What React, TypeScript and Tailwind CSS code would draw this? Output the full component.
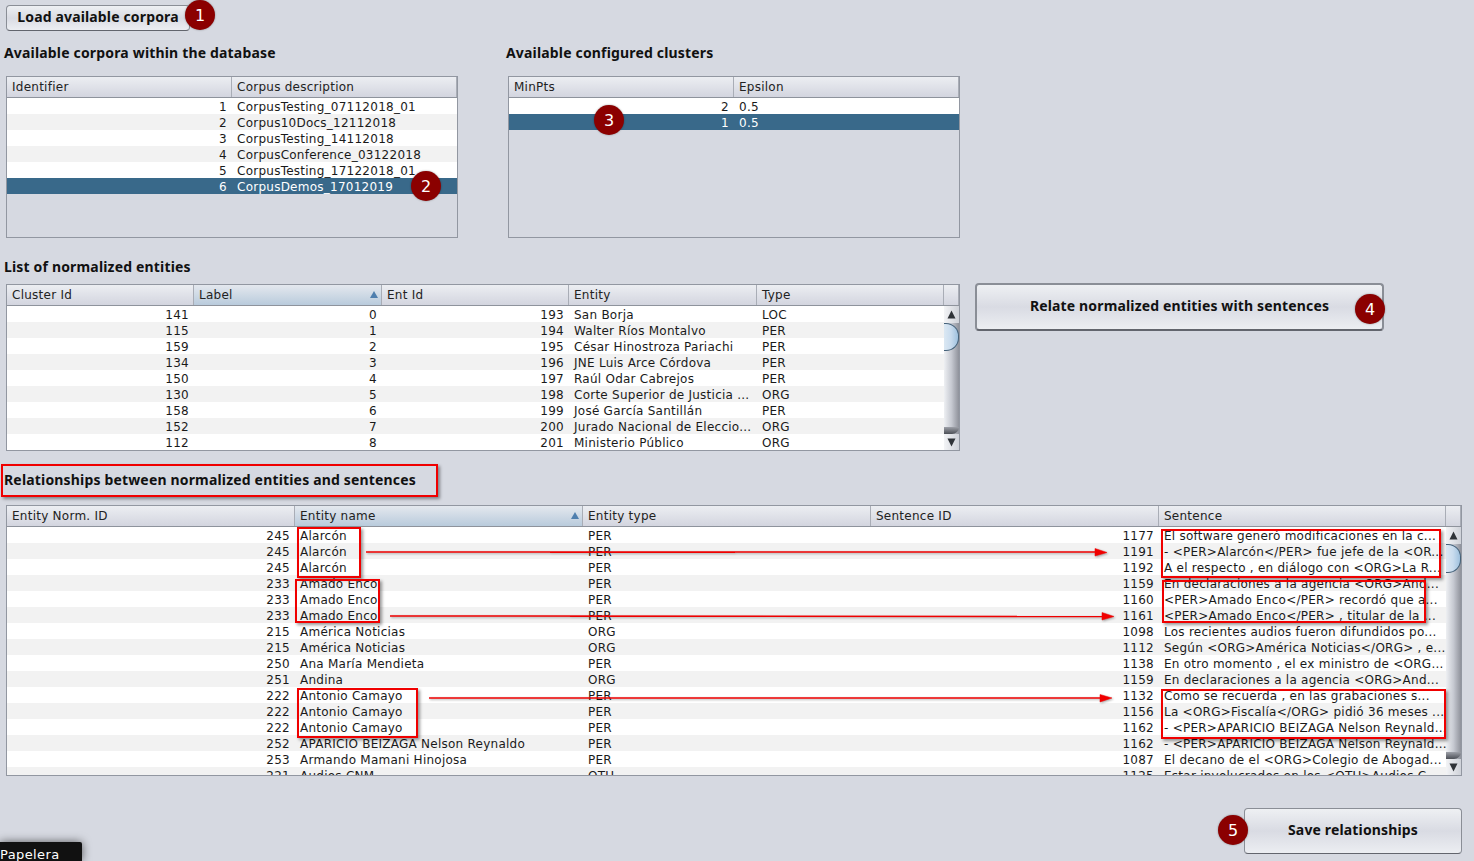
import React from 'react';

type Col = { label: string; width: number; right?: boolean; sorted?: boolean };
type Row = string[];

const corpora: Row[] = [
  ['1', 'CorpusTesting_07112018_01'],
  ['2', 'Corpus10Docs_12112018'],
  ['3', 'CorpusTesting_14112018'],
  ['4', 'CorpusConference_03122018'],
  ['5', 'CorpusTesting_17122018_01'],
  ['6', 'CorpusDemos_17012019'],
];

const clusters: Row[] = [
  ['2', '0.5'],
  ['1', '0.5'],
];

const entities: Row[] = [
  ['141', '0', '193', 'San Borja', 'LOC'],
  ['115', '1', '194', 'Walter Ríos Montalvo', 'PER'],
  ['159', '2', '195', 'César Hinostroza Pariachi', 'PER'],
  ['134', '3', '196', 'JNE Luis Arce Córdova', 'PER'],
  ['150', '4', '197', 'Raúl Odar Cabrejos', 'PER'],
  ['130', '5', '198', 'Corte Superior de Justicia ...', 'ORG'],
  ['158', '6', '199', 'José García Santillán', 'PER'],
  ['152', '7', '200', 'Jurado Nacional de Eleccio...', 'ORG'],
  ['112', '8', '201', 'Ministerio Público', 'ORG'],
];

const relations: Row[] = [
  ['245', 'Alarcón', 'PER', '1177', 'El software generó modificaciones en la c...'],
  ['245', 'Alarcón', 'PER', '1191', '- <PER>Alarcón</PER> fue jefe de la <OR...'],
  ['245', 'Alarcón', 'PER', '1192', 'A el respecto , en diálogo con <ORG>La R...'],
  ['233', 'Amado Enco', 'PER', '1159', 'En declaraciones a la agencia <ORG>And...'],
  ['233', 'Amado Enco', 'PER', '1160', '<PER>Amado Enco</PER> recordó que a...'],
  ['233', 'Amado Enco', 'PER', '1161', '<PER>Amado Enco</PER> , titular de la ...'],
  ['215', 'América Noticias', 'ORG', '1098', 'Los recientes audios fueron difundidos po...'],
  ['215', 'América Noticias', 'ORG', '1112', 'Según <ORG>América Noticias</ORG> , e...'],
  ['250', 'Ana María Mendieta', 'PER', '1138', 'En otro momento , el ex ministro de <ORG...'],
  ['251', 'Andina', 'ORG', '1159', 'En declaraciones a la agencia <ORG>And...'],
  ['222', 'Antonio Camayo', 'PER', '1132', 'Como se recuerda , en las grabaciones s...'],
  ['222', 'Antonio Camayo', 'PER', '1156', 'La <ORG>Fiscalía</ORG> pidió 36 meses ...'],
  ['222', 'Antonio Camayo', 'PER', '1162', '- <PER>APARICIO BEIZAGA Nelson Reynald...'],
  ['252', 'APARICIO BEIZAGA Nelson Reynaldo', 'PER', '1162', '- <PER>APARICIO BEIZAGA Nelson Reynald...'],
  ['253', 'Armando Mamani Hinojosa', 'PER', '1087', 'El decano de el <ORG>Colegio de Abogad...'],
  ['221', 'Audios CNM', 'OTU', '1125', 'Estar involucrados en los <OTU>Audios C...'],
];

function Scrollbar({ thumbTop, thumbHeight, shadeBottom }: { thumbTop: number; thumbHeight: number; shadeBottom: number }) {
  return (
    <div className="absolute top-0 right-0 bottom-0 w-[15px] bg-gradient-to-r from-[#eef0f3] via-[#c6c9d1] to-[#8f929b]">
      <div className="absolute left-0 top-0 w-[15px] h-[17px] bg-gradient-to-r from-[#f3f4f6] to-[#cfd2d9]" />
      <svg className="absolute top-[4px] left-[3px]" width="9" height="9" viewBox="0 0 9 9">
        <path d="M4.5 0.5 L8.5 8.5 L0.5 8.5 Z" fill="#2f3338" />
      </svg>
      <div
        className="absolute left-0 w-[15px] rounded-r-[13px] border border-l-0 border-[#45627a] bg-gradient-to-r from-[#dbe8f3] via-[#c9dcee] to-[#9fc1de]"
        style={{ top: thumbTop, height: thumbHeight }}
      />
      <div
        className="absolute left-0 w-[15px] h-[7px] rounded-br-[12px] bg-gradient-to-b from-[#9ea1a9] to-[#4d5057]"
        style={{ bottom: shadeBottom }}
      />
      <div className="absolute left-0 bottom-0 w-[15px] h-[16px] bg-gradient-to-r from-[#f3f4f6] to-[#cfd2d9]" />
      <svg className="absolute bottom-[3px] left-[3px]" width="9" height="9" viewBox="0 0 9 9">
        <path d="M0.5 0.5 L8.5 0.5 L4.5 8.5 Z" fill="#2f3338" />
      </svg>
    </div>
  );
}

function Table({
  cols,
  rows,
  selected,
  className,
  scrollbar,
}: {
  cols: Col[];
  rows: Row[];
  selected?: number;
  className: string;
  scrollbar?: React.ReactNode;
}) {
  return (
    <div className={`border border-[#9297a1] overflow-hidden flex flex-col tracking-[0.25px] ${className}`}>
      <div className="flex h-[21px] shrink-0 border-b border-[#8e939c] bg-gradient-to-b from-[#eceef2] to-[#d3d5df]">
        {cols.map((c) => (
          <div
            key={c.label}
            style={{ width: c.width }}
            className={`relative shrink-0 pl-[5px] leading-[21px] border-r border-[#a9adb6] text-[#222] ${
              c.sorted ? 'bg-gradient-to-b from-[#e4e8ee] to-[#b9cbdc]' : ''
            }`}
          >
            {c.label}
            {c.sorted && (
              <svg className="absolute right-[3px] top-[6px]" width="8" height="7" viewBox="0 0 8 7">
                <path d="M4 0 L8 7 L0 7 Z" fill="#4f7fae" />
              </svg>
            )}
          </div>
        ))}
      </div>
      <div className="relative flex-1 overflow-hidden">
        {rows.map((r, i) => (
          <div
            key={i}
            className={`flex h-4 ${
              selected === i ? 'bg-[#39698a] text-white' : i % 2 ? 'bg-[#f2f2f2] text-[#1a1a1a]' : 'bg-white text-[#1a1a1a]'
            }`}
          >
            {r.map((cell, j) => (
              <div
                key={j}
                style={{ width: cols[j].width }}
                className={`shrink-0 px-[5px] leading-[18px] whitespace-nowrap overflow-hidden ${cols[j].right ? 'text-right' : ''}`}
              >
                {cell}
              </div>
            ))}
          </div>
        ))}
        {scrollbar}
      </div>
    </div>
  );
}

function Badge({ n, className }: { n: number; className: string }) {
  return (
    <div
      className={`absolute w-[30px] h-[30px] rounded-full bg-[#8b0000] text-white text-[16px] leading-[31px] text-center shadow-[0_0_2px_rgba(0,0,0,0.4)] ${className}`}
    >
      {n}
    </div>
  );
}

function RedBox({ className }: { className: string }) {
  return <div className={`absolute border-2 border-[#f00000] shadow-[2px_2px_3px_rgba(0,0,0,0.4)] ${className}`} />;
}

function SwingButton({ label, className }: { label: string; className: string }) {
  return (
    <button
      className={`rounded-[4px] border border-[#8a8e96] border-b-[#62656d] bg-gradient-to-b from-[#eef0f3] via-[#d9dbe3] to-[#eceef2] pb-[3px] font-['Noto_Sans',sans-serif] font-bold text-[14px] text-[#111] tracking-[0.15px] ${className}`}
    >
      {label}
    </button>
  );
}

export default function App() {
  const heading = "font-['Noto_Sans',sans-serif] font-bold text-[14px] leading-5 text-[#111] tracking-[0.17px]";

  return (
    <div className="relative w-[1474px] h-[861px] overflow-hidden bg-[#d6d9e1] text-[12px] font-['DejaVu_Sans',sans-serif]">
      <div className="pt-[5px] pl-[6px]">
        <SwingButton label="Load available corpora" className="block w-[184px] h-[26px]" />
      </div>

      {/* corpora + clusters */}
      <div className="flex gap-[48px] pl-[4px] mt-3">
        <section className="w-[454px]">
          <h2 className={heading}>Available corpora within the database</h2>
          <Table
            className="mt-[13px] ml-[2px] w-[452px] h-[162px]"
            cols={[
              { label: 'Identifier', width: 225, right: true },
              { label: 'Corpus description', width: 225 },
            ]}
            rows={corpora}
            selected={5}
          />
        </section>
        <section className="w-[454px]">
          <h2 className={heading}>Available configured clusters</h2>
          <Table
            className="mt-[13px] ml-[2px] w-[452px] h-[162px]"
            cols={[
              { label: 'MinPts', width: 225, right: true },
              { label: 'Epsilon', width: 225 },
            ]}
            rows={clusters}
            selected={1}
          />
        </section>
      </div>

      {/* normalized entities */}
      <h2 className={`${heading} mt-[19px] ml-[4px]`}>List of normalized entities</h2>
      <div className="flex items-start ml-[6px] mt-[7px]">
        <Table
          className="w-[954px] h-[167px] bg-white"
          cols={[
            { label: 'Cluster Id', width: 187, right: true },
            { label: 'Label', width: 188, right: true, sorted: true },
            { label: 'Ent Id', width: 187, right: true },
            { label: 'Entity', width: 188 },
            { label: 'Type', width: 187 },
            { label: '', width: 15 },
          ]}
          rows={entities}
          scrollbar={<Scrollbar thumbTop={17} thumbHeight={28} shadeBottom={16} />}
        />
        <SwingButton
          label="Relate normalized entities with sentences"
          className="ml-[15px] -mt-px w-[409px] h-[48px] border-2 border-[#7fa6cc] border-b-[#5f7f9f]"
        />
      </div>

      {/* relationships */}
      <h2 className={`${heading} mt-[19px] ml-[4px]`}>Relationships between normalized entities and sentences</h2>
      <Table
        className="ml-[6px] mt-[15px] w-[1456px] h-[271px] bg-white"
        cols={[
          { label: 'Entity Norm. ID', width: 288, right: true },
          { label: 'Entity name', width: 288, sorted: true },
          { label: 'Entity type', width: 288 },
          { label: 'Sentence ID', width: 288, right: true },
          { label: 'Sentence', width: 287 },
          { label: '', width: 15 },
        ]}
        rows={relations}
        scrollbar={<Scrollbar thumbTop={17} thumbHeight={29} shadeBottom={16} />}
      />
      <div className="flex justify-end pr-[12px] mt-[32px]">
        <SwingButton label="Save relationships" className="w-[218px] h-[46px]" />
      </div>

      {/* annotations drawn over the window */}
      <RedBox className="left-[1px] top-[464px] w-[437px] h-[33px]" />
      <RedBox className="left-[297px] top-[527px] w-[64px] h-[51px]" />
      <RedBox className="left-[295px] top-[579px] w-[85px] h-[44px]" />
      <RedBox className="left-[297px] top-[688px] w-[121px] h-[50px]" />
      <RedBox className="left-[1161px] top-[529px] w-[280px] h-[49px]" />
      <RedBox className="left-[1162px] top-[580px] w-[264px] h-[43px]" />
      <RedBox className="left-[1161px] top-[689px] w-[285px] h-[50px]" />

      <svg className="absolute inset-0 pointer-events-none drop-shadow-[1px_1px_1px_rgba(0,0,0,0.35)]" width="1474" height="861">
        <g fill="#f00000" stroke="#f00000">
          <path d="M366 552 L1096 552" strokeWidth="1.5" fill="none" />
          <path d="M550 552.5 L735 552.5" strokeWidth="1" fill="none" />
          <path d="M1095 548.5 L1107 552.5 L1095 556 Z" strokeWidth="0.5" />
          <path d="M390 616 L1103 616.5" strokeWidth="1.5" fill="none" />
          <path d="M570 616.5 L750 616.5" strokeWidth="1" fill="none" />
          <path d="M1102 612.5 L1114 616.5 L1102 620 Z" strokeWidth="0.5" />
          <path d="M429 698 L1100 698" strokeWidth="1.5" fill="none" />
          <path d="M1100 694.5 L1112 698 L1100 702 Z" strokeWidth="0.5" />
        </g>
      </svg>

      <Badge n={1} className="left-[185px] top-0" />
      <Badge n={2} className="left-[411px] top-[171px]" />
      <Badge n={3} className="left-[594px] top-[105px]" />
      <Badge n={4} className="left-[1355px] top-[294px]" />
      <Badge n={5} className="left-[1218px] top-[815px]" />

      {/* desktop dock tooltip peeking in at the corner */}
      <div className="absolute left-0 top-[842px] w-[82px] h-[19px] bg-[#111] rounded-tr-[2px] text-white text-[13px] tracking-[0.4px] leading-[25px] shadow-[0_0_10px_rgba(0,0,0,0.6)]">
        Papelera
      </div>
    </div>
  );
}
